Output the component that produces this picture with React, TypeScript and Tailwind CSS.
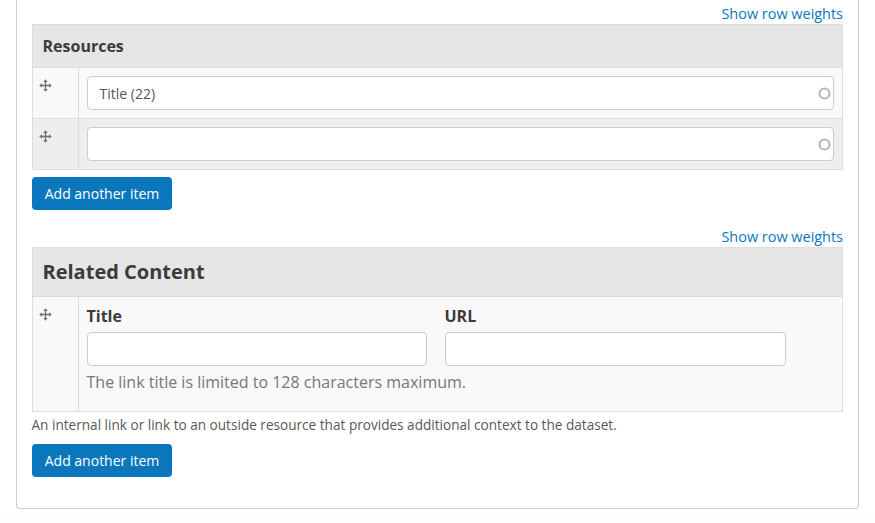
function MoveIcon() {
  return (
    <svg width="13" height="13" viewBox="0 0 13 13" className="ml-[6px] mt-[11px] block">
      <path d="M6.5 1.5v10M1.5 6.5h10" stroke="#6c6c6c" strokeWidth="1.3" />
      <path fill="#777" d="M6.5 0.2 8.8 3H4.2ZM6.5 12.8 4.2 10h4.6ZM0.2 6.5 3 4.2v4.6ZM12.8 6.5 10 8.8V4.2Z" />
    </svg>
  );
}
function Weights() {
  return <div className="flex h-5 justify-end text-[14.45px] leading-5 text-[#0a77bd]"><a>Show row weights</a></div>;
}
function AddButton() {
  return <button className="block h-[33px] w-[140px] rounded-[4px] bg-[#0a77bd] text-[14px] leading-[33px] text-white">Add another item</button>;
}
function AutoInput({ value }: { value: string }) {
  return (
    <div className="mx-2 mt-2 flex h-[34px] items-center justify-between rounded-[4px] border border-[#ccc] bg-white pl-[11.5px] pr-[2px] text-[14px] text-[#555]">
      <span>{value}</span>
      <svg width="13" height="13" viewBox="0 0 13 13" className="mt-px"><circle cx="6.5" cy="6.5" r="5" fill="none" stroke="#b7b7b7" strokeWidth="2.2" /></svg>
    </div>
  );
}
function Field({ label }: { label: string }) {
  return (
    <div>
      <div className="h-[27px] text-[16px] font-bold leading-[22px] text-[#3b3b3b]"><span className="-ml-[0.5px]">{label}</span></div>
      <div className="h-[34px] rounded-[4px] border border-[#ccc] bg-white" />
    </div>
  );
}
export default function App() {
  return (
    <main className="h-[523px] overflow-hidden bg-[#fdfdfd] font-['Open_Sans',sans-serif]">
      <div className="h-[512px] bg-white px-4">
        <section className="h-[509px] w-[843px] rounded-b-[4px] border border-t-0 border-[#ccc] px-[15px] pt-1">
          <Weights />
          <div className="h-[146px] border border-[#ddd]">
            <div className="h-[43px] border-b border-[#ddd] bg-[#e6e6e6] pl-[9.5px] text-[16px] font-bold leading-[43px] text-[#3b3b3b]">Resources</div>
            <div className="flex h-[51px] border-b border-[#ddd] bg-[#f9f9f9]">
              <div className="w-[46px] border-r border-[#ddd]"><MoveIcon /></div>
              <div className="flex-1"><AutoInput value="Title (22)" /></div>
            </div>
            <div className="flex h-[50px] bg-[#eee]">
              <div className="w-[46px] border-r border-[#ddd]"><MoveIcon /></div>
              <div className="flex-1"><AutoInput value="" /></div>
            </div>
          </div>
          <div className="h-[57px] pt-[7px]"><AddButton /></div>
          <Weights />
          <div className="h-[165px] border border-[#ddd]">
            <div className="h-[49px] border-b border-[#ddd] bg-[#e6e6e6] pl-[9.5px] text-[20px] font-bold leading-[48px] text-[#3b3b3b]">Related Content</div>
            <div className="flex h-[114px] bg-[#f9f9f9]">
              <div className="w-[46px] border-r border-[#ddd]"><MoveIcon /></div>
              <div className="pl-2 pt-2">
                <div className="grid grid-cols-[340px_341px] gap-[18px]"><Field label="Title" /><Field label="URL" /></div>
                <p className="-ml-[0.5px] mt-[5px] text-[16px] leading-[22px] text-[#777]">The link title is limited to 128 characters maximum.</p>
              </div>
            </div>
          </div>
          <p className="-ml-[0.5px] mt-[3px] h-[29px] text-[13.6px] leading-5 text-[#595959]">An internal link or link to an outside resource that provides additional context to the dataset.</p>
          <AddButton />
        </section>
      </div>
    </main>
  );
}
